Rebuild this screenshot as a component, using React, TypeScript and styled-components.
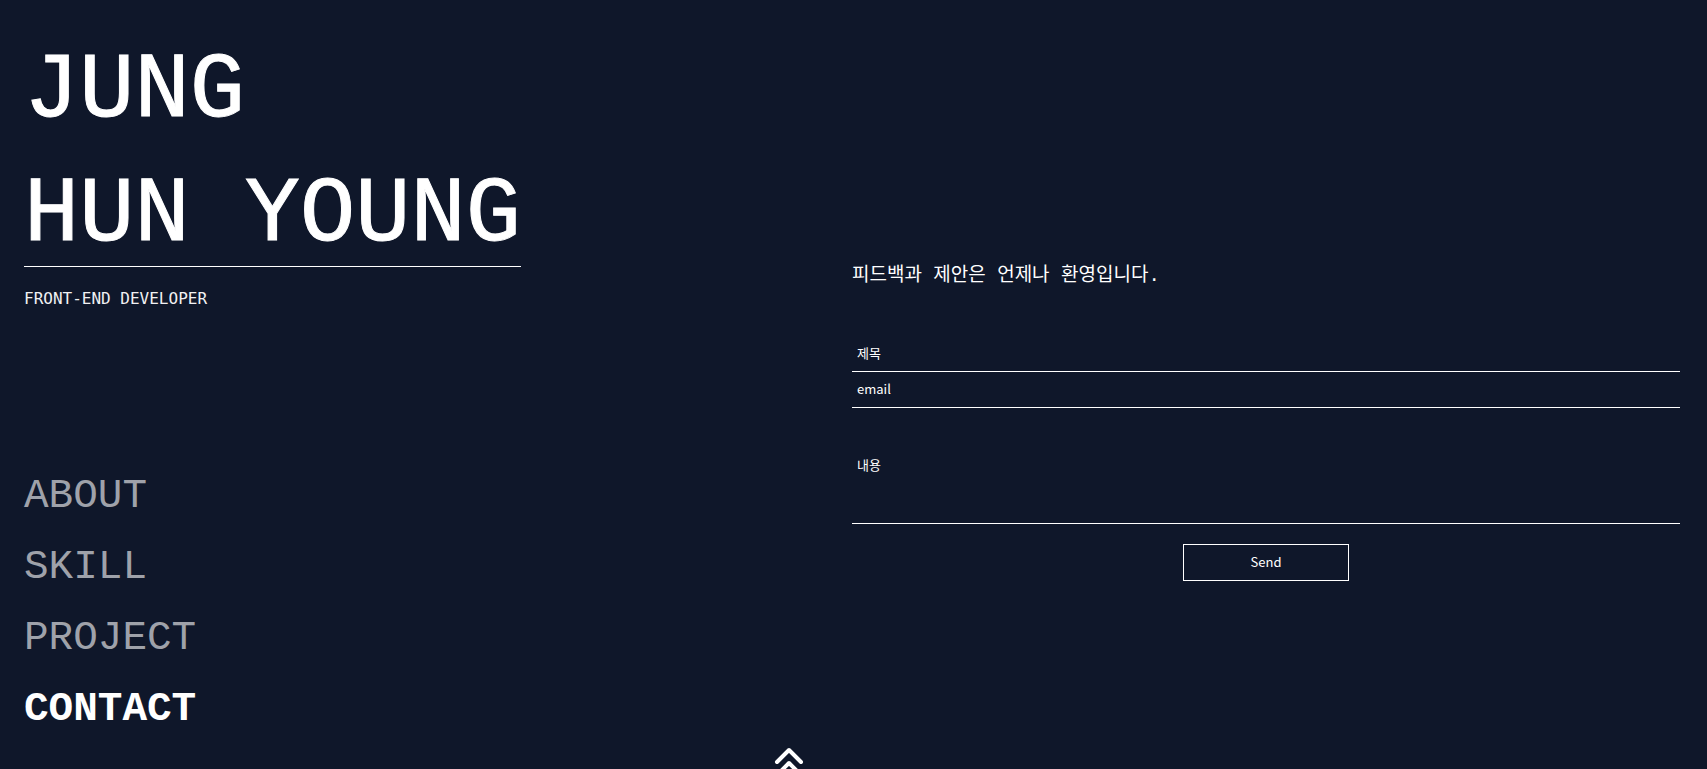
import React from "react";
import styled, { createGlobalStyle } from "styled-components";

const GlobalStyle = createGlobalStyle`
  *, *::before, *::after { box-sizing: border-box; }
  body {
    margin: 0;
    background: #0f172a;
    color: #fff;
    font-family: "Liberation Mono", "Noto Sans CJK KR", monospace;
  }
`;

const Page = styled.main`
  position: relative;
  display: grid;
  grid-template-columns: 1fr 1fr;
  height: 100vh;
  overflow: hidden;
  padding: 30px 27px 30px 24px;
`;

const Intro = styled.header`
  display: flex;
  flex-direction: column;
  align-items: flex-start;
  justify-content: space-between;
`;

const Name = styled.h1`
  margin: 0;
  border-bottom: 1px solid #fff;
  font-size: 92px;
  font-weight: 400;
  line-height: 124px;
  height: 237px;
  white-space: nowrap;
  -webkit-text-stroke: 1px #fff;
`;

const Role = styled.p`
  margin: 20px 0 0;
  font-family: "DejaVu Sans Mono", monospace;
  font-size: 16px;
  line-height: 24px;
  color: #f1f1f3;
`;

const Menu = styled.nav`
  display: flex;
  flex-direction: column;
  align-items: flex-start;
  gap: 11px;
`;

const MenuLink = styled.a<{ $active?: boolean }>`
  color: ${({ $active }) => ($active ? "#fff" : "#9fa2aa")};
  font-size: 41px;
  font-weight: ${({ $active }) => ($active ? 700 : 400)};
  line-height: 60px;
  text-decoration: none;
`;

const Contact = styled.section`
  padding-top: 232px;
`;

const Lead = styled.h2`
  margin: 0 0 45px;
  font-size: 19px;
  font-weight: 400;
  line-height: 29px;
`;

const Form = styled.form`
  display: flex;
  flex-direction: column;
`;

const fieldFont = `"Noto Sans CJK KR", sans-serif`;

const Field = styled.input`
  width: 100%;
  height: 36px;
  padding: 0 5px 2px;
  border: 0;
  border-bottom: 1px solid #fff;
  border-radius: 0;
  background: transparent;
  color: #fff;
  font: 13px/20px ${fieldFont};
  &::placeholder { color: #fff; opacity: 1; }
`;

const Message = styled.textarea`
  width: 100%;
  height: 76px;
  margin-top: 40px;
  padding: 7px 5px;
  border: 0;
  border-bottom: 1px solid #fff;
  border-radius: 0;
  background: transparent;
  color: #fff;
  font: 13px/20px ${fieldFont};
  resize: none;
  &::placeholder { color: #fff; opacity: 1; }
`;

const Send = styled.button`
  align-self: center;
  width: 20%;
  height: 37px;
  margin-top: 20px;
  padding: 0 0 2px;
  border: 1px solid #fff;
  background: transparent;
  color: #fff;
  font: 13px/20px ${fieldFont};
  cursor: pointer;
`;

const TopLink = styled.a`
  position: absolute;
  bottom: -11px;
  left: calc(50% - 80px);
  color: #fff;
  svg { display: block; }
`;

const links = ["ABOUT", "SKILL", "PROJECT", "CONTACT"];

export default function App() {
  return (
    <>
      <GlobalStyle />
      <Page>
        <Intro>
          <div>
            <Name>
              JUNG
              <br />
              HUN YOUNG
            </Name>
            <Role>FRONT-END DEVELOPER</Role>
          </div>
          <Menu aria-label="Sections">
            {links.map((l) => (
              <MenuLink key={l} href={`#${l.toLowerCase()}`} $active={l === "CONTACT"}>
                {l}
              </MenuLink>
            ))}
          </Menu>
        </Intro>
        <Contact id="contact">
          <Lead>피드백과 제안은 언제나 환영입니다.</Lead>
          <Form onSubmit={(e) => e.preventDefault()}>
            <Field type="text" name="title" aria-label="제목" placeholder="제목" />
            <Field type="email" name="email" aria-label="email" placeholder="email" />
            <Message name="message" aria-label="내용" placeholder="내용" />
            <Send type="submit">Send</Send>
          </Form>
        </Contact>
        <TopLink href="#about" aria-label="Back to top">
          <svg width="30" height="33" viewBox="0 0 30 33" fill="none" stroke="currentColor" strokeWidth="4" strokeLinecap="round" strokeLinejoin="round">
            <path d="M3 15 15 3l12 12M3 28 15 16l12 12" />
          </svg>
        </TopLink>
      </Page>
    </>
  );
}
